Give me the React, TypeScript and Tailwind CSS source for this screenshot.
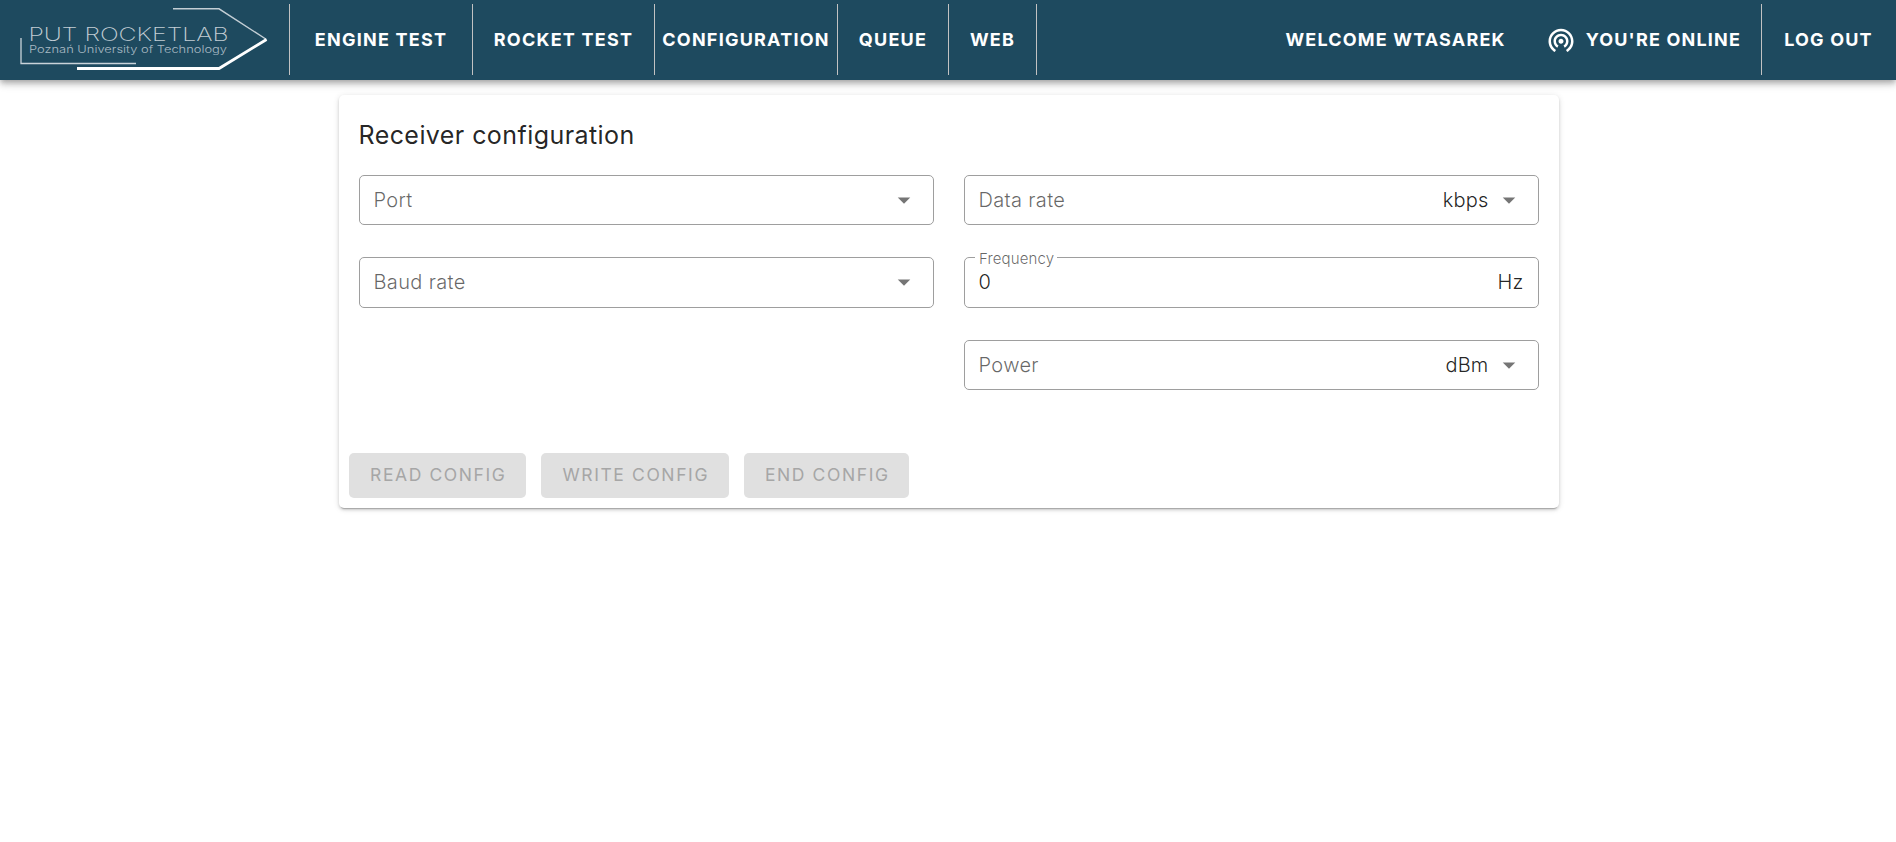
import type { ReactNode } from "react";

const navItems = [
  { label: "Engine test", width: "w-[183px]" },
  { label: "Rocket test", width: "w-[182px]" },
  { label: "Configuration", width: "w-[183px]" },
  { label: "Queue", width: "w-[111px]" },
  { label: "Web", width: "w-[88px]" },
];

function Logo() {
  return (
    <svg className="h-20 w-[289px] shrink-0 normal-case" viewBox="0 0 289 80" fill="none">
      <path d="M173 8.8H219L266.5 39.5" stroke="#c3ced5" strokeWidth="1.4" />
      <path d="M21 38V63.5H136" stroke="#c9d3d9" strokeWidth="1.3" />
      <path d="M77 68.5H219L266.5 39.5" stroke="#fff" strokeWidth="2.9" />
      <text x="28.5" y="41.2" textLength="200" lengthAdjust="spacingAndGlyphs" className="fill-[#c3ced5] text-[18.5px] font-extralight">
        PUT ROCKETLAB
      </text>
      <text x="29" y="52.8" textLength="198" lengthAdjust="spacingAndGlyphs" className="fill-[#a9bac4] text-[10.5px] font-light">
        Poznań University of Technology
      </text>
    </svg>
  );
}

function TetheringIcon() {
  return (
    <svg className="size-[30px] fill-white" viewBox="0 0 24 24">
      <path d="M12 11c-1.1 0-2 .9-2 2s.9 2 2 2 2-.9 2-2-.9-2-2-2zm6 2c0-3.31-2.69-6-6-6s-6 2.69-6 6c0 2.22 1.21 4.15 3 5.19l1-1.74c-1.19-.7-2-1.97-2-3.45 0-2.21 1.79-4 4-4s4 1.79 4 4c0 1.48-.81 2.75-2 3.45l1 1.74c1.79-1.04 3-2.97 3-5.19zM12 3C6.48 3 2 7.48 2 13c0 3.7 2.01 6.92 4.99 8.65l1-1.73C5.61 18.53 4 15.96 4 13c0-4.42 3.58-8 8-8s8 3.58 8 8c0 2.96-1.61 5.53-4 6.92l1 1.73c2.99-1.73 5-4.95 5-8.65 0-5.52-4.48-10-10-10z" />
    </svg>
  );
}

function Field({ label, suffix, value, select = true }: { label: string; suffix?: string; value?: string; select?: boolean }) {
  return (
    <div className="relative flex items-center rounded-[5px] border border-[#9e9e9e] pr-[14.5px] pb-px pl-[13.5px] text-xl font-light tracking-[0.19px] text-black/87">
      {value === undefined ? (
        <span className="tracking-[0.35px] text-black/60">{label}</span>
      ) : (
        <>
          <span className="absolute -top-[9px] left-[10px] bg-white pr-[3px] pl-1 text-[15px] leading-5 tracking-[0.14px] text-black/60">{label}</span>
          <span>{value}</span>
        </>
      )}
      <span className="ml-auto">{suffix}</span>
      {select && (
        <svg className="ml-[5px] size-[30px] fill-black/54" viewBox="0 0 24 24">
          <path d="M7 10l5 5 5-5H7z" />
        </svg>
      )}
    </div>
  );
}

function ConfigButton({ width, children }: { width: string; children: ReactNode }) {
  return (
    <button
      disabled
      className={`${width} h-[45px] rounded-[5px] bg-[#e0e0e0] pl-[1.5px] text-[17.5px] font-normal tracking-[1.6px] text-[#a6a6a6] uppercase`}
    >
      {children}
    </button>
  );
}

export default function App() {
  return (
    <div className="h-[842px] bg-white font-['Inter',sans-serif]">
      <header className="relative flex h-20 bg-[#1e4a5f] text-[18px] font-bold whitespace-nowrap text-white uppercase shadow-[0_2.5px_5px_-1px_rgba(0,0,0,0.2),0_5px_6px_0_rgba(0,0,0,0.14),0_1px_12.5px_0_rgba(0,0,0,0.12)]">
        <Logo />
        <nav className="mt-1 flex h-[71px] border-l border-[#c2c2c2] tracking-[1.22px]">
          {navItems.map((item) => (
            <a key={item.label} className={`${item.width} flex items-center justify-center border-r border-[#c2c2c2]`}>
              {item.label}
            </a>
          ))}
        </nav>
        <div className="mt-1 ml-auto flex h-[71px] items-center tracking-[1.18px]">
          <span className="mr-10">Welcome wtasarek</span>
          <TetheringIcon />
          <span className="ml-[10px]">You're online</span>
          <a className="ml-[20px] flex h-[71px] w-[135px] items-center justify-center border-l border-[#c2c2c2] pr-px">Log out</a>
        </div>
      </header>
      <main className="mt-[15px] ml-[339px] h-[413px] w-[1220px] rounded-[5px] bg-white shadow-[0_3px_1px_-2px_rgba(0,0,0,0.2),0_2px_3px_0_rgba(0,0,0,0.14),0_1px_6px_0_rgba(0,0,0,0.12)]">
        <h1 className="pt-5 pl-[19.5px] text-[25px] leading-10 font-normal tracking-[0.43px] text-black/87">Receiver configuration</h1>
        <div className="mt-5 grid h-[278px] grid-cols-2 grid-rows-[50px_51px_50px] gap-x-[30px] gap-y-8 px-5">
          <Field label="Port" />
          <Field label="Data rate" suffix="kbps" />
          <Field label="Baud rate" />
          <Field label="Frequency" value="0" suffix="Hz" select={false} />
          <div />
          <Field label="Power" suffix="dBm" />
        </div>
        <div className="flex gap-[15px] px-[10px]">
          <ConfigButton width="w-[177px]">Read config</ConfigButton>
          <ConfigButton width="w-[188px]">Write config</ConfigButton>
          <ConfigButton width="w-[165px]">End config</ConfigButton>
        </div>
      </main>
    </div>
  );
}
